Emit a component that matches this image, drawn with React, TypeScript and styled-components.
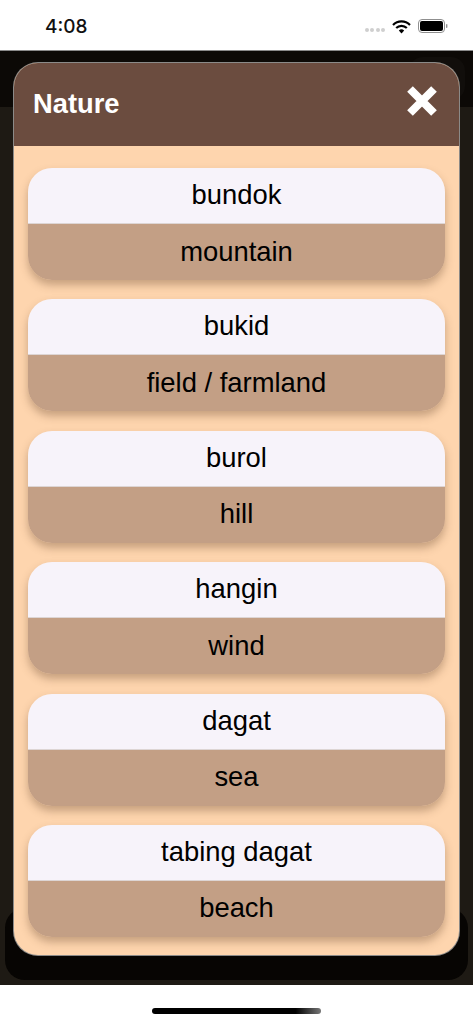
import React from 'react'
import styled, { createGlobalStyle } from 'styled-components'

const GlobalStyle = createGlobalStyle`
    html, body {
        margin: 0;
        padding: 0;
        background: #fff;
        font-family: "Liberation Sans", Arial, sans-serif;
    }
`

const Page = styled.div`
    width: 473px;
    height: 1024px;
    display: flex;
    flex-direction: column;
    overflow: hidden;
    background: #fff;
`

const StatusBar = styled.div`
    height: 51px;
    flex-shrink: 0;
    display: flex;
    align-items: center;
    justify-content: space-between;
    padding: 3px 25px 0 45px;
    box-sizing: border-box;
    border-bottom: 1px solid #8a8a8a;
`

const Time = styled.span`
    font-size: 19px;
    font-weight: 500;
    color: #111;
    font-family: Inter, "Liberation Sans", sans-serif;
`

const StatusIcons = styled.div`
    display: flex;
    align-items: center;
    gap: 7px;
`

const SignalDots = styled.div`
    display: flex;
    gap: 1.5px;
    margin-top: 6px;
`

const SignalDot = styled.i`
    width: 4px;
    height: 4px;
    border-radius: 50%;
    background: #cfcfcf;
`

const Screen = styled.div`
    position: relative;
    height: 934px;
    flex-shrink: 0;
    display: flex;
    flex-direction: column;
    background: #1e1a14;
`

const TopBand = styled.div`
    height: 56px;
    flex-shrink: 0;
    box-sizing: border-box;
    padding: 6px 8px 7px 0;
    display: flex;
    justify-content: flex-end;
    background: #0c0906;
`

const BehindButton = styled.div`
    width: 56px;
    border-radius: 14px;
    background: #110e0b;
`

const Filler = styled.div`
    flex-grow: 1;
`

const BehindCard = styled.div`
    height: 72px;
    margin: 0 5px 5px;
    border-radius: 20px;
    background: #070503;
`

const Modal = styled.div`
    position: absolute;
    top: 12px;
    left: 14px;
    width: 445px;
    height: 892px;
    box-sizing: border-box;
    border-radius: 24px;
    overflow: hidden;
    background: #fed5ae;
    box-shadow: 0 0 0 1px #8b8a88;
    display: flex;
    flex-direction: column;
`

const ModalHeader = styled.div`
    height: 83px;
    flex-shrink: 0;
    box-sizing: border-box;
    background: #6b4c3f;
    display: flex;
    align-items: center;
    justify-content: space-between;
    padding: 0 22px 2px 19px;
`

const Title = styled.h2`
    margin: 0;
    color: #fff;
    font-size: 27.3px;
    font-weight: 700;
`

const CloseButton = styled.button`
    border: 0;
    padding: 0;
    margin-bottom: 5px;
    background: none;
    display: flex;
`

const WordList = styled.div`
    display: flex;
    flex-direction: column;
    gap: 19.4px;
    padding: 22px 14px 0 14px;
`

const WordCard = styled.div`
    height: 112px;
    border-radius: 24px;
    overflow: hidden;
    display: flex;
    flex-direction: column;
    box-shadow: 0 5px 9px rgba(90, 60, 35, 0.34);
`

const WordRow = styled('div') <{ $english?: boolean }>`
    flex: ${(props) => props.$english ? '1' : '0 0 55px'};
    box-sizing: border-box;
    padding-bottom: 1px;
    display: flex;
    align-items: center;
    justify-content: center;
    color: #000;
    font-size: 27.4px;
    background: ${(props) => props.$english ? '#c39f85' : '#f7f3fa'};
    border-top: ${(props) => props.$english ? '1px solid #ddd5d4' : '0'};
`

const HomeArea = styled.div`
    flex-grow: 1;
    display: flex;
    align-items: flex-start;
    justify-content: center;
    padding-top: 23px;
`

const HomeBar = styled.div`
    width: 169px;
    height: 6px;
    border-radius: 3px;
    background: linear-gradient(90deg, #000 0%, #000 85%, #777 100%);
`

const words = [
    { tl: 'bundok', en: 'mountain' },
    { tl: 'bukid', en: 'field / farmland' },
    { tl: 'burol', en: 'hill' },
    { tl: 'hangin', en: 'wind' },
    { tl: 'dagat', en: 'sea' },
    { tl: 'tabing dagat', en: 'beach' },
]

export default function App() {
    return (
        <>
            <GlobalStyle />
            <Page>
                <StatusBar>
                    <Time>4:08</Time>
                    <StatusIcons>
                        <SignalDots>
                            <SignalDot />
                            <SignalDot />
                            <SignalDot />
                            <SignalDot />
                        </SignalDots>
                        <svg width="19" height="14" viewBox="0 0 19 14">
                            <path d="M1 5 A12 12 0 0 1 18 5" fill="none" stroke="#000" strokeWidth="2.2" />
                            <path d="M4.2 8 A7.5 7.5 0 0 1 14.8 8" fill="none" stroke="#000" strokeWidth="2.2" />
                            <path d="M9.5 13.5 L6.8 10.6 A4 4 0 0 1 12.2 10.6 Z" fill="#000" />
                        </svg>
                        <svg width="30" height="15" viewBox="0 0 30 15">
                            <rect x="0.5" y="0.5" width="26" height="13" rx="3.5" fill="none" stroke="#8f8f8f" />
                            <rect x="2" y="2" width="23" height="10" rx="2" fill="#000" />
                            <rect x="28" y="5" width="1.4" height="4" rx="0.7" fill="#8f8f8f" />
                        </svg>
                    </StatusIcons>
                </StatusBar>
                <Screen>
                    <TopBand>
                        <BehindButton />
                    </TopBand>
                    <Filler />
                    <BehindCard />
                    <Modal>
                        <ModalHeader>
                            <Title>Nature</Title>
                            <CloseButton>
                                <svg width="30" height="30" viewBox="0 0 30 30">
                                    <path d="M3 3 L27 27 M27 3 L3 27" stroke="#fff" strokeWidth="8" />
                                </svg>
                            </CloseButton>
                        </ModalHeader>
                        <WordList>
                            {words.map((word) => (
                                <WordCard key={word.tl}>
                                    <WordRow>{word.tl}</WordRow>
                                    <WordRow $english>{word.en}</WordRow>
                                </WordCard>
                            ))}
                        </WordList>
                    </Modal>
                </Screen>
                <HomeArea>
                    <HomeBar />
                </HomeArea>
            </Page>
        </>
    )
}
